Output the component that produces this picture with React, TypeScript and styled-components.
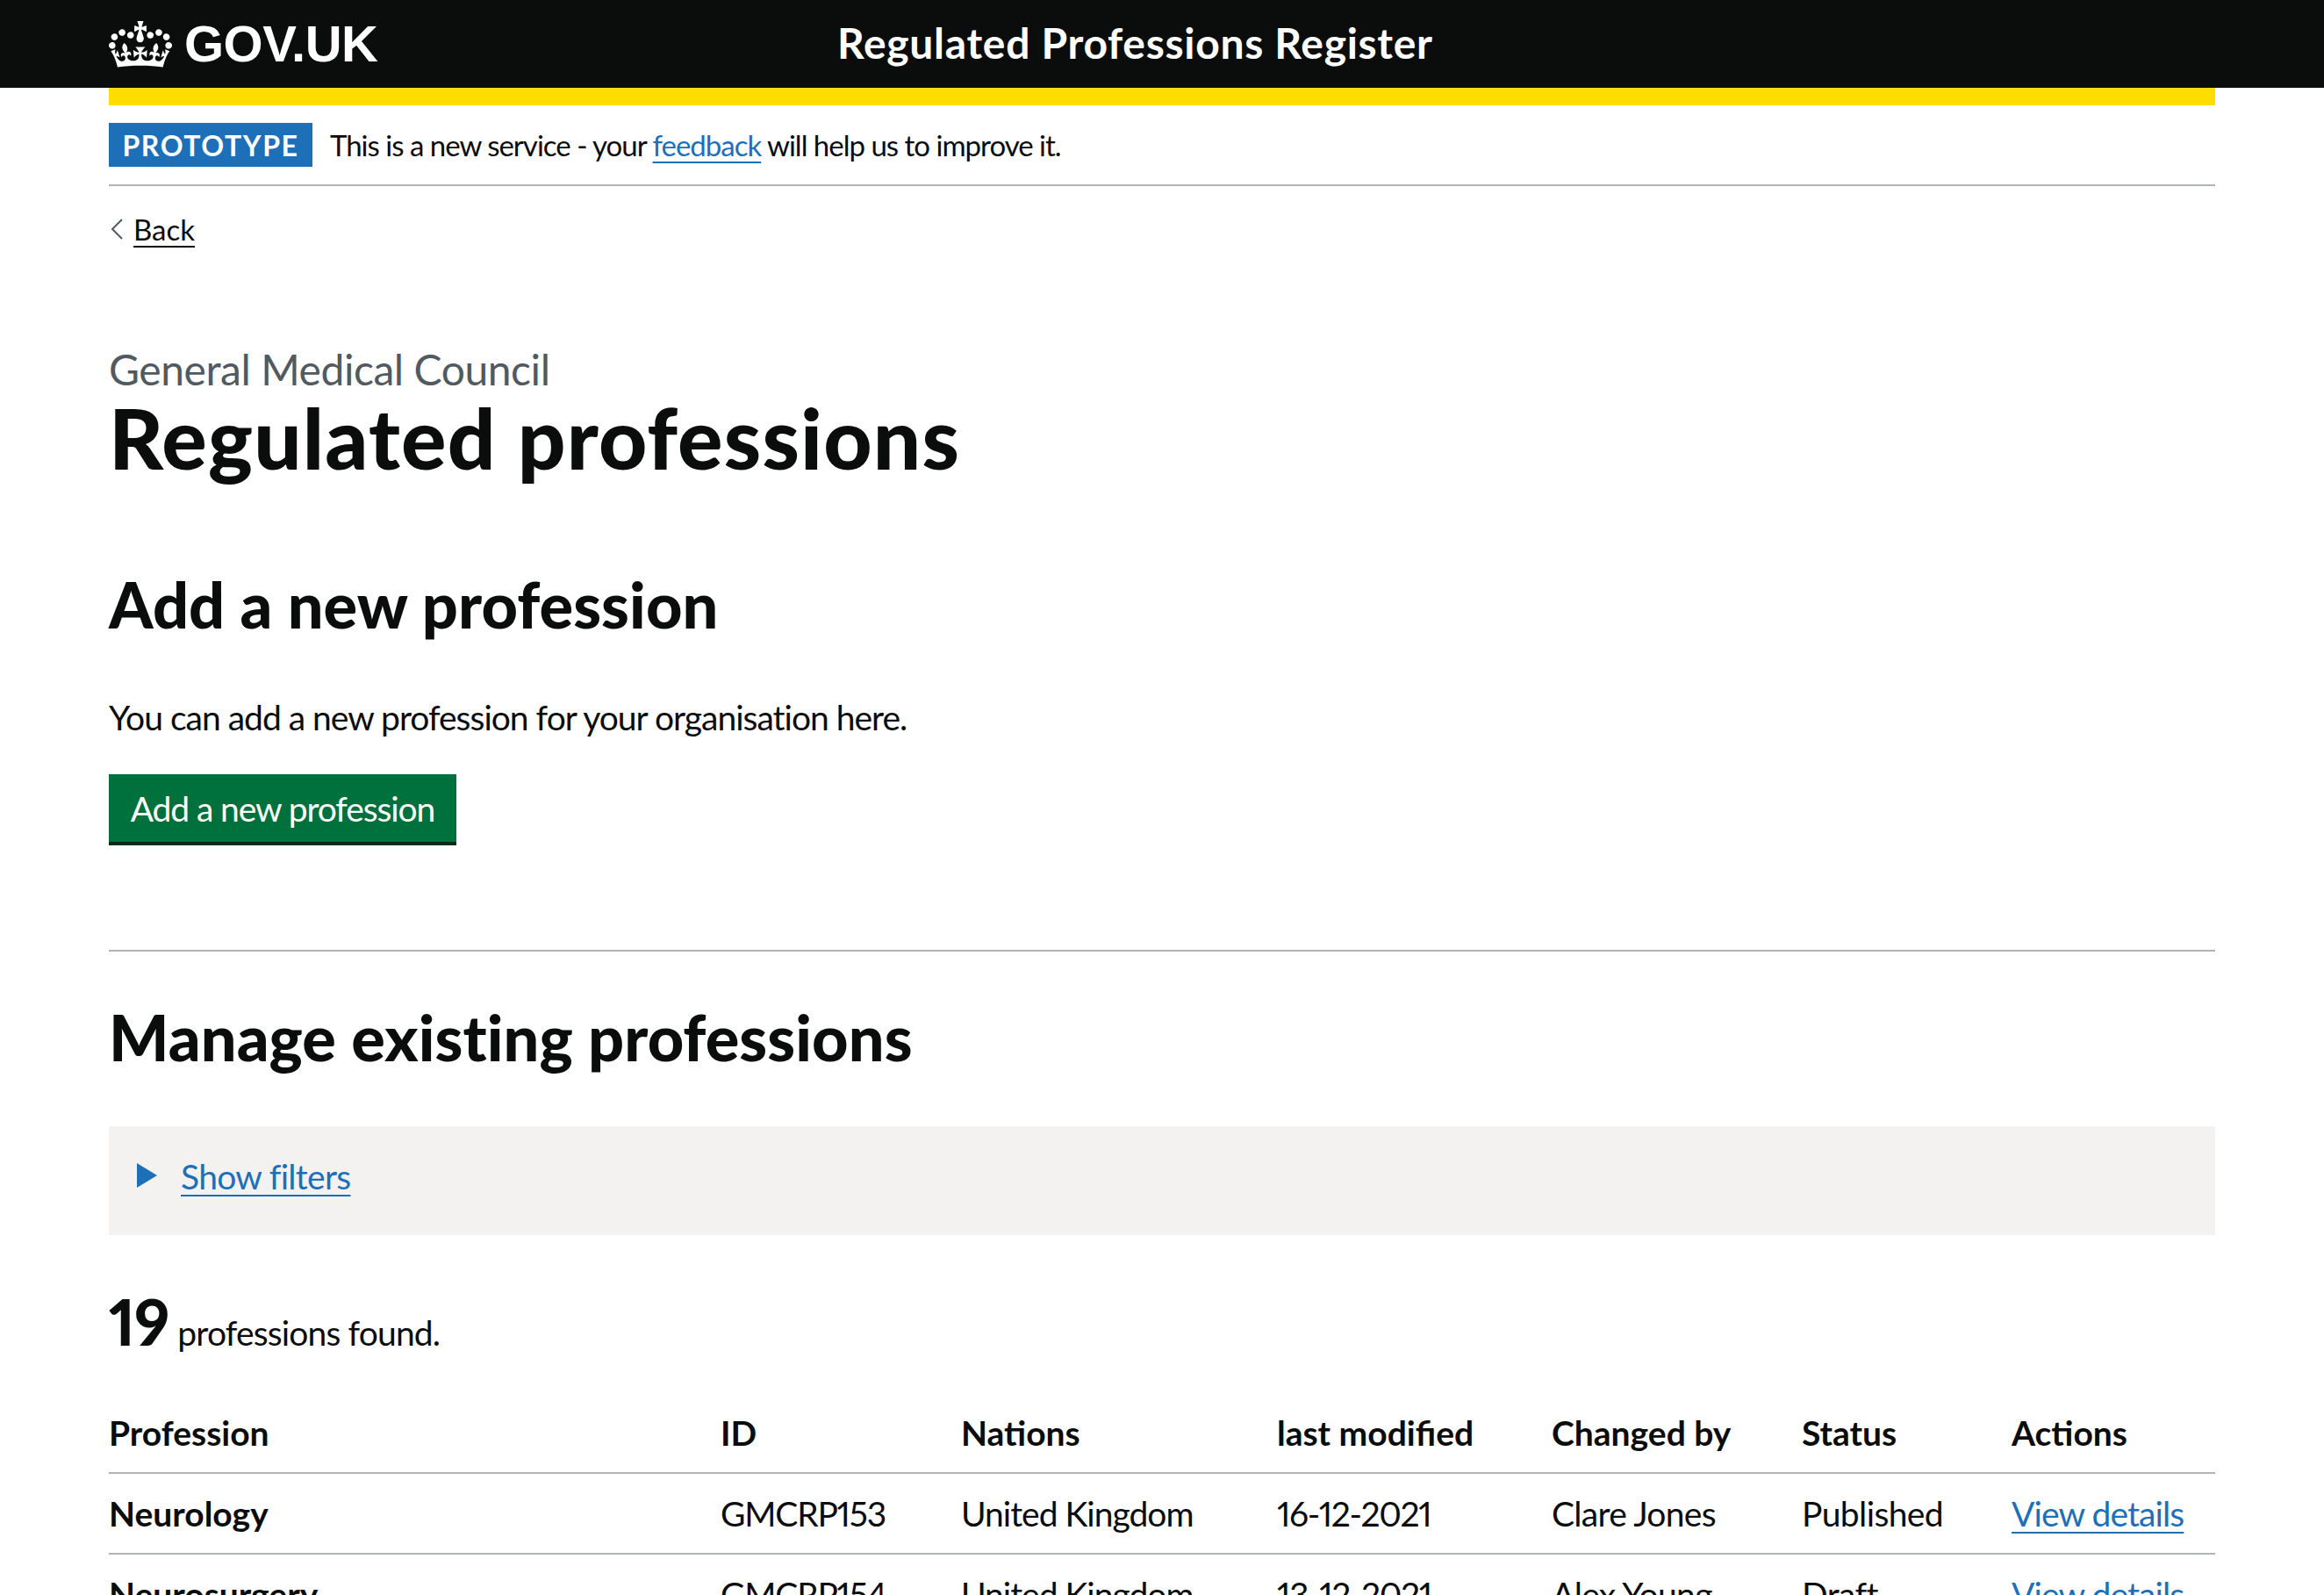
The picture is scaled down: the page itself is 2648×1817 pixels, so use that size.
import React from "react";
import styled, { createGlobalStyle } from "styled-components";

const GlobalStyle = createGlobalStyle`
  html, body {
    margin: 0;
    height: 1817px;
    overflow: hidden;
    background: #fff;
  }
  body {
    font-family: "Lato", "Noto Sans", sans-serif;
    font-variant-numeric: proportional-nums;
    color: #0b0c0c;
  }
`;

const Header = styled.header`
  height: 100px;
  background: #0b0c0c;
  color: #fff;
`;

const HeaderInner = styled.div`
  width: 2400px;
  height: 100%;
  margin: 0 auto;
  display: flex;
  align-items: center;
`;

const Logo = styled.div`
  width: 830px;
  display: flex;
  align-items: center;
  gap: 14px;
`;

const LogoText = styled.span`
  font-family: "Liberation Sans", Arial, sans-serif;
  font-weight: 700;
  font-size: 58px;
  line-height: 60px;
  letter-spacing: -0.5px;
`;

const ServiceName = styled.div`
  font-size: 48px;
  font-weight: 700;
  line-height: 58px;
  letter-spacing: 0.7px;
  padding-bottom: 2px;
`;

const Page = styled.div`
  width: 2400px;
  margin: 0 auto;
`;

const YellowBar = styled.div`
  height: 20px;
  background: #ffdd00;
`;

const PhaseBanner = styled.div`
  display: flex;
  align-items: center;
  gap: 20px;
  padding: 20px 0;
  border-bottom: 2px solid #b1b4b6;
  font-size: 33px;
  letter-spacing: -1px;
`;

const Tag = styled.strong`
  width: 232px;
  height: 50px;
  display: flex;
  align-items: center;
  justify-content: center;
  background: #1d70b8;
  color: #fff;
  font-size: 32px;
  font-weight: 700;
  letter-spacing: 1.6px;
`;

const BlueLink = styled.a`
  color: #1d70b8;
  text-decoration: underline;
  text-decoration-thickness: 2px;
  text-underline-offset: 6px;
`;

const BackLink = styled.a`
  display: flex;
  align-items: center;
  gap: 12px;
  margin-top: 29px;
  height: 40px;
  padding-left: 2px;
  font-size: 33px;
  color: #0b0c0c;
  text-decoration: underline;
  text-decoration-thickness: 2px;
  text-underline-offset: 6px;
`;

const Caption = styled.div`
  margin-top: 112px;
  font-size: 48px;
  line-height: 55px;
  letter-spacing: -0.45px;
  color: #505a5f;
`;

const Title = styled.h1`
  margin: 0 0 100px;
  font-size: 96px;
  line-height: 100px;
  font-weight: 900;
  letter-spacing: 1.2px;
`;

const SectionTitle = styled.h2<{ $below: number }>`
  margin: 0 0 ${(p) => p.$below}px;
  font-size: 72px;
  line-height: 80px;
  font-weight: 900;
  letter-spacing: 0.1px;
`;

const Body = styled.p`
  margin: 0 0 40px;
  font-size: 39px;
  line-height: 50px;
  letter-spacing: -1px;
`;

const Button = styled.button`
  display: block;
  width: 396px;
  height: 81px;
  padding: 0;
  border: 0;
  border-bottom: 4px solid #002d18;
  background: #00703c;
  color: #fff;
  font-family: inherit;
  font-size: 39px;
  letter-spacing: -1.1px;
`;

const Rule = styled.hr`
  margin: 119px 0 57px;
  border: 0;
  border-top: 2px solid #b1b4b6;
`;

const FilterPanel = styled.div`
  height: 124px;
  padding: 32px 32px 0;
  box-sizing: border-box;
  display: flex;
  align-items: flex-start;
  gap: 27px;
  background: #f3f2f1;
  font-size: 39px;
  line-height: 50px;
  letter-spacing: -0.7px;
`;

const Triangle = styled.svg`
  width: 23px;
  height: 28px;
  margin-top: 10px;
`;

const ResultCount = styled.div`
  display: flex;
  align-items: baseline;
  gap: 10px;
  margin: 58px 0 29px;
  font-size: 39px;
  line-height: 80px;
  letter-spacing: -0.85px;
`;

const Count = styled.strong`
  font-size: 72px;
  font-weight: 900;
  letter-spacing: -1px;
`;

const Table = styled.table`
  width: 2400px;
  table-layout: fixed;
  border-collapse: collapse;
  font-size: 39px;
  line-height: 50px;
`;

const HeadCell = styled.th<{ $width: number }>`
  width: ${(p) => p.$width}px;
  padding: 20px 0;
  border-bottom: 2px solid #b1b4b6;
  text-align: left;
  font-weight: 700;
`;

const Cell = styled.td<{ $bold?: boolean; $spacing: number }>`
  padding: 20px 0;
  border-bottom: 2px solid #b1b4b6;
  font-weight: ${(p) => (p.$bold ? 700 : 400)};
  letter-spacing: ${(p) => p.$spacing}px;
`;

const columns: [string, number][] = [
  ["Profession", 697],
  ["ID", 274],
  ["Nations", 360],
  ["last modified", 313],
  ["Changed by", 285],
  ["Status", 239],
  ["Actions", 232],
];

// dates and ids run tighter than the words around them
const cellSpacing = [0, -1.2, -1, -1.4, -0.7, -0.6];

const rows = [
  ["Neurology", "GMCRP153", "United Kingdom", "16-12-2021", "Clare Jones", "Published"],
  ["Neurosurgery", "GMCRP154", "United Kingdom", "13-12-2021", "Alex Young", "Draft"],
];

function Crown() {
  return (
    <svg width="72" height="53" viewBox="0 0 132 97" fill="currentColor">
      <path d="M25 30.2c3.5 1.5 7.7-.2 9.1-3.7 1.5-3.6-.2-7.8-3.9-9.2-3.6-1.4-7.6.3-9.1 3.9-1.4 3.5.3 7.5 3.9 9zM9 39.5c3.6 1.5 7.8-.2 9.2-3.7 1.5-3.6-.2-7.8-3.9-9.1-3.6-1.5-7.6.2-9.1 3.8-1.4 3.5.3 7.5 3.8 9zM4.4 57.2c3.5 1.5 7.7-.2 9.1-3.8 1.5-3.6-.2-7.7-3.9-9.1-3.5-1.5-7.6.3-9.1 3.8-1.4 3.5.3 7.6 3.9 9.1zm38.3-21.4c3.5 1.5 7.7-.2 9.1-3.8 1.5-3.6-.2-7.7-3.9-9.1-3.6-1.5-7.6.3-9.1 3.8-1.3 3.6.4 7.7 3.9 9.1zm64.4-5.6c-3.6 1.5-7.8-.2-9.1-3.7-1.5-3.6.2-7.8 3.8-9.2 3.6-1.4 7.7.3 9.2 3.9 1.3 3.5-.4 7.5-3.9 9zm15.9 9.3c-3.6 1.5-7.7-.2-9.1-3.7-1.5-3.6.2-7.8 3.7-9.1 3.6-1.5 7.7.2 9.2 3.8 1.5 3.5-.3 7.5-3.8 9zm4.7 17.7c-3.6 1.5-7.8-.2-9.2-3.8-1.5-3.6.2-7.7 3.9-9.1 3.6-1.5 7.7.3 9.2 3.8 1.3 3.5-.4 7.6-3.9 9.1zM89.3 35.8c-3.6 1.5-7.8-.2-9.2-3.8-1.4-3.6.2-7.7 3.9-9.1 3.6-1.5 7.7.3 9.2 3.8 1.4 3.6-.3 7.7-3.9 9.1zM69.7 17.7l8.9 4.7V9.3l-8.9 2.8c-.2-.3-.5-.6-.9-.9L72.4 0H59.6l3.5 11.2c-.3.3-.6.5-.9.9l-8.8-2.8v13.1l8.8-4.7c.3.3.6.7.9.9l-5 15.4v.1c-.2.8-.4 1.6-.4 2.4 0 4.1 3.1 7.5 7 8.1h1.4c3.9-.6 7-4 7-8.1 0-.8-.1-1.6-.4-2.4V34l-5.1-15.4c.5-.2.7-.5 1.1-.9zM66 92.8c16.9 0 32.8 1.1 47.1 3.2 4-16.9 8.9-26.7 14-33.5l-9.6-3.4c1 4.9 1.1 7.2 0 10.2-1.5-1.4-3-4.3-4.2-8.7L108.6 76c2.8-2 5-3.2 7.5-3.3-4.4 9.4-10 11.9-13.6 11.2-4.3-.8-6.3-4.6-5.6-7.9 1-4.7 5.7-5.9 8-.5 4.3-8.7-3-11.4-7.6-8.8 7.1-7.2 7.9-13.5 2.1-21.1-8 6.1-8.1 12.3-4.5 20.8-4.7-5.4-12.1-2.5-9.5 6.2 3.4-5.2 7.9-2 7.2 3.1-.6 4.3-6.4 7.8-13.5 7.2-10.3-.9-10.9-8-11.2-13.8 2.5-.5 7.1 1.8 11 7.3L80.2 60c-4.1 4.4-8 5.3-12.3 5.4 1.4-4.4 8-11.6 8-11.6H55.5s6.4 7.2 7.9 11.6c-4.2-.1-8-1-12.3-5.4l1.4 16.4c3.9-5.5 8.5-7.7 10.9-7.3-.3 5.8-.9 12.8-11.1 13.8-7.2.6-12.9-2.9-13.5-7.2-.7-5 3.8-8.3 7.1-3.1 2.7-8.7-4.6-11.6-9.4-6.2 3.7-8.5 3.6-14.7-4.6-20.8-5.8 7.6-5 13.9 2.2 21.1-4.7-2.6-11.9.1-7.7 8.8 2.3-5.5 7.1-4.2 8.1.5.7 3.3-1.3 7.1-5.7 7.9-3.5.7-9-1.8-13.5-11.2 2.5.1 4.7 1.3 7.5 3.3l-4.7-15.4c-1.2 4.4-2.7 7.2-4.3 8.7-1.1-3-.9-5.3 0-10.2l-9.5 3.4c5 6.9 9.9 16.7 14 33.5 14.8-2.1 30.8-3.2 47.7-3.2z" />
    </svg>
  );
}

export default function App() {
  return (
    <>
      <GlobalStyle />
      <Header>
        <HeaderInner>
          <Logo>
            <Crown />
            <LogoText>GOV.UK</LogoText>
          </Logo>
          <ServiceName>Regulated Professions Register</ServiceName>
        </HeaderInner>
      </Header>
      <Page>
        <YellowBar />
        <PhaseBanner>
          <Tag>PROTOTYPE</Tag>
          <span>
            This is a new service - your <BlueLink href="#">feedback</BlueLink> will help us to improve it.
          </span>
        </PhaseBanner>
        <BackLink href="#">
          <svg width="14" height="26" viewBox="0 0 14 26" fill="none" stroke="#505a5f" strokeWidth="2">
            <path d="M13 2 2 13l11 11" />
          </svg>
          Back
        </BackLink>
        <Caption>General Medical Council</Caption>
        <Title>Regulated professions</Title>
        <SectionTitle $below={64}>Add a new profession</SectionTitle>
        <Body>You can add a new profession for your organisation here.</Body>
        <Button>Add a new profession</Button>
        <Rule />
        <SectionTitle $below={62}>Manage existing professions</SectionTitle>
        <FilterPanel>
          <Triangle viewBox="0 0 23 28" fill="#1d70b8">
            <path d="M0 0l23 14L0 28z" />
          </Triangle>
          <BlueLink href="#">Show filters</BlueLink>
        </FilterPanel>
        <ResultCount>
          <Count>19</Count>
          <span>professions found.</span>
        </ResultCount>
        <Table>
          <thead>
            <tr>
              {columns.map(([label, width]) => (
                <HeadCell key={label} $width={width}>{label}</HeadCell>
              ))}
            </tr>
          </thead>
          <tbody>
            {rows.map((row) => (
              <tr key={row[1]}>
                {row.map((value, i) => (
                  <Cell key={value} $bold={i === 0} $spacing={cellSpacing[i]}>{value}</Cell>
                ))}
                <Cell $spacing={-0.9}><BlueLink href="#">View details</BlueLink></Cell>
              </tr>
            ))}
          </tbody>
        </Table>
      </Page>
    </>
  );
}
